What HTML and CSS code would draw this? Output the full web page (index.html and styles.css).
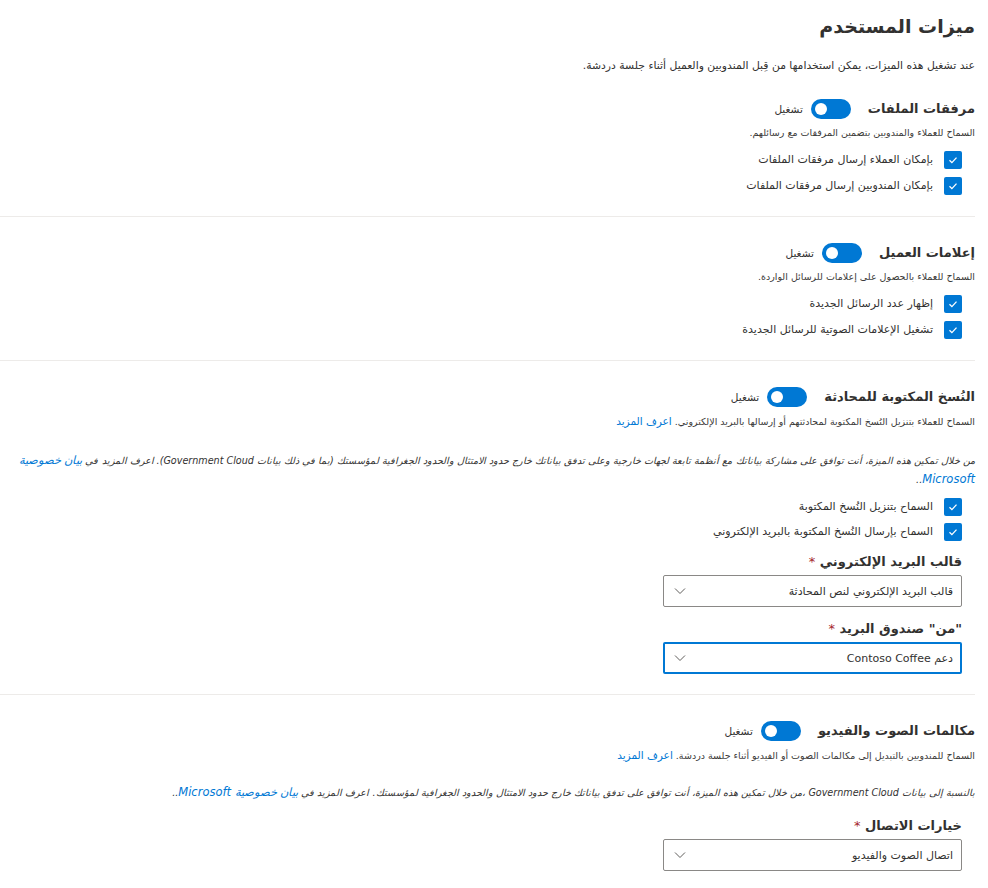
FILE: index.html
```html
<!DOCTYPE html>
<html lang="ar" dir="rtl">
<head>
<meta charset="utf-8">
<link rel="stylesheet" href="styles.css">
</head>
<body>
<div class="page">
  <h1 class="title">ميزات المستخدم</h1>
  <p class="intro">عند تشغيل هذه الميزات، يمكن استخدامها من قِبل المندوبين والعميل أثناء جلسة دردشة.</p>

  <section class="section first">
    <div class="head">
      <h2 class="heading">مرفقات الملفات</h2>
      <span class="toggle"><span class="knob"></span></span>
      <span class="toggle-label">تشغيل</span>
    </div>
    <p class="sub">السماح للعملاء والمندوبين بتضمين المرفقات مع رسائلهم.</p>
    <div class="checks">
      <label class="check"><span class="box"><svg viewBox="0 0 12 12"><path d="M2.5 6.2l2.4 2.4 4.6-5"/></svg></span>بإمكان العملاء إرسال مرفقات الملفات</label>
      <label class="check"><span class="box"><svg viewBox="0 0 12 12"><path d="M2.5 6.2l2.4 2.4 4.6-5"/></svg></span>بإمكان المندوبين إرسال مرفقات الملفات</label>
    </div>
  </section>

  <section class="section">
    <div class="head">
      <h2 class="heading">إعلامات العميل</h2>
      <span class="toggle"><span class="knob"></span></span>
      <span class="toggle-label">تشغيل</span>
    </div>
    <p class="sub">السماح للعملاء بالحصول على إعلامات للرسائل الواردة.</p>
    <div class="checks">
      <label class="check"><span class="box"><svg viewBox="0 0 12 12"><path d="M2.5 6.2l2.4 2.4 4.6-5"/></svg></span>إظهار عدد الرسائل الجديدة</label>
      <label class="check"><span class="box"><svg viewBox="0 0 12 12"><path d="M2.5 6.2l2.4 2.4 4.6-5"/></svg></span>تشغيل الإعلامات الصوتية للرسائل الجديدة</label>
    </div>
  </section>

  <section class="section">
    <div class="head">
      <h2 class="heading">النُسخ المكتوبة للمحادثة</h2>
      <span class="toggle"><span class="knob"></span></span>
      <span class="toggle-label">تشغيل</span>
    </div>
    <p class="sub">السماح للعملاء بتنزيل النُسخ المكتوبة لمحادثتهم أو إرسالها بالبريد الإلكتروني. <a class="link" href="#">اعرف المزيد</a></p>
    <p class="notice">من خلال تمكين هذه الميزة، أنت توافق على مشاركة بياناتك مع أنظمة تابعة لجهات خارجية وعلى تدفق بياناتك خارج حدود الامتثال والحدود الجغرافية لمؤسستك (بما في ذلك بيانات Government Cloud). اعرف المزيد في <a class="link" href="#">بيان خصوصية</a> <a class="link" href="#">Microsoft</a>..</p>
    <div class="checks after-notice">
      <label class="check"><span class="box"><svg viewBox="0 0 12 12"><path d="M2.5 6.2l2.4 2.4 4.6-5"/></svg></span>السماح بتنزيل النُسخ المكتوبة</label>
      <label class="check"><span class="box"><svg viewBox="0 0 12 12"><path d="M2.5 6.2l2.4 2.4 4.6-5"/></svg></span>السماح بإرسال النُسخ المكتوبة بالبريد الإلكتروني</label>
    </div>
    <div class="field">
      <div class="field-label">قالب البريد الإلكتروني <span class="req">*</span></div>
      <div class="select"><span>قالب البريد الإلكتروني لنص المحادثة</span><svg class="chev" viewBox="0 0 12 8"><path d="M1 1.5l5 5 5-5"/></svg></div>
    </div>
    <div class="field">
      <div class="field-label">"من" صندوق البريد <span class="req">*</span></div>
      <div class="select focused"><span>دعم Contoso Coffee</span><svg class="chev" viewBox="0 0 12 8"><path d="M1 1.5l5 5 5-5"/></svg></div>
    </div>
  </section>

  <section class="section last">
    <div class="head">
      <h2 class="heading">مكالمات الصوت والفيديو</h2>
      <span class="toggle"><span class="knob"></span></span>
      <span class="toggle-label">تشغيل</span>
    </div>
    <p class="sub">السماح للمندوبين بالتبديل إلى مكالمات الصوت أو الفيديو أثناء جلسة دردشة. <a class="link" href="#">اعرف المزيد</a></p>
    <p class="notice single">بالنسبة إلى بيانات Government Cloud ،من خلال تمكين هذه الميزة، أنت توافق على تدفق بياناتك خارج حدود الامتثال والحدود الجغرافية لمؤسستك. اعرف المزيد في <a class="link" href="#">بيان خصوصية Microsoft</a>..</p>
    <div class="field after-notice">
      <div class="field-label">خيارات الاتصال <span class="req">*</span></div>
      <div class="select"><span>اتصال الصوت والفيديو</span><svg class="chev" viewBox="0 0 12 8"><path d="M1 1.5l5 5 5-5"/></svg></div>
    </div>
  </section>
</div>
</body>
</html>
```

FILE: styles.css
```css
* { box-sizing: border-box; }
html, body { margin: 0; padding: 0; background: #fff; }
body {
  font-family: "Segoe UI", "DejaVu Sans", "Noto Sans", sans-serif;
  color: #323130;
}
.page {
  padding: 10px 13px 0 0;
}
.title {
  margin: 0;
  font-size: 19px;
  font-weight: 700;
  line-height: 32px;
}
.intro {
  margin: 16px 0 0 0;
  font-size: 10.8px;
  line-height: 16px;
}
.section {
  border-bottom: 1px solid #edebe9;
  padding: 24px 0 20px 0;
}
.section.first { padding-top: 23px; }
.section.last { border-bottom: none; }
.head {
  display: flex;
  align-items: center;
  gap: 8px;
  height: 24px;
}
.heading {
  margin: 0 0 0 9px;
  font-size: 13px;
  font-weight: 700;
  line-height: 22px;
}
.toggle {
  width: 40px;
  height: 20px;
  border-radius: 10px;
  background: #0078d4;
  display: flex;
  align-items: center;
  justify-content: flex-end;
  padding: 0 4px;
}
.knob {
  width: 12px;
  height: 12px;
  border-radius: 50%;
  background: #fff;
}
.toggle-label {
  font-size: 10.5px;
  line-height: 16px;
}
.sub {
  margin: 5px 0 0 0;
  font-size: 9.5px;
  line-height: 14px;
  color: #3b3a39;
}
.link {
  color: #0078d4;
  text-decoration: none;
}
.sub .link {
  font-size: 10.5px;
}
.notice {
  margin: 22px 0 0 0;
  font-size: 9.6px;
  line-height: 18px;
  font-style: italic;
  color: #323130;
}
.notice.single { margin-top: 20px; }
.notice .link { font-size: 11.5px; }
.checks {
  display: flex;
  flex-direction: column;
  gap: 6px;
  margin: 10px 13px 0 0;
}
.checks.after-notice { margin-top: 8px; gap: 5px; }
.check {
  display: flex;
  align-items: center;
  gap: 11px;
  font-size: 11px;
  line-height: 20px;
}
.box {
  width: 18px;
  height: 18px;
  border-radius: 2px;
  background: #0078d4;
  display: flex;
  align-items: center;
  justify-content: center;
}
.box svg {
  width: 12px;
  height: 12px;
  fill: none;
  stroke: #fff;
  stroke-width: 1.3;
}
.field {
  margin: 10px 13px 0 0;
  width: 299px;
}
.field + .field { margin-top: 12px; }
.field.after-notice { margin-top: 14px; }
.field-label {
  font-size: 13px;
  font-weight: 700;
  line-height: 20px;
  margin-bottom: 3px;
}
.req { color: #a4262c; font-weight: 400; }
.select {
  height: 32px;
  border: 1px solid #8a8886;
  border-radius: 2px;
  display: flex;
  align-items: center;
  justify-content: space-between;
  padding: 0 8px 0 8px;
  font-size: 11px;
}
.select.focused {
  border: 2px solid #0078d4;
  padding: 0 7px;
}
.chev {
  width: 12px;
  height: 8px;
  fill: none;
  stroke: #605e5c;
  stroke-width: 1;
  margin-left: 2px;
}
```
